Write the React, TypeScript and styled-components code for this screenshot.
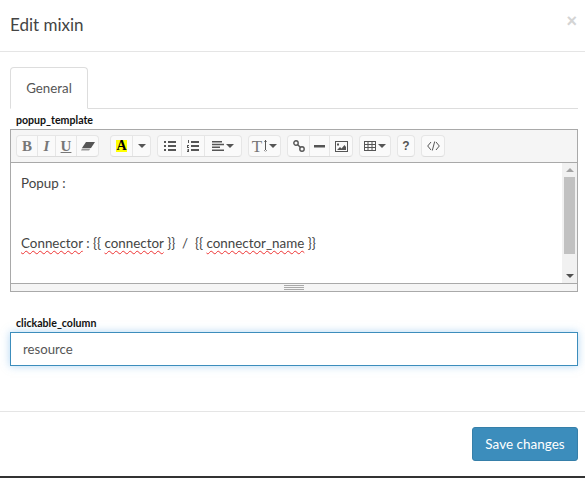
import type { ReactNode } from "react";
import styled, { createGlobalStyle } from "styled-components";

const FONT = `Lato, "Noto Sans", sans-serif`;

const GlobalStyle = createGlobalStyle`
  html, body {
    margin: 0;
    padding: 0;
    background: #fff;
  }
  * {
    box-sizing: border-box;
  }
`;

const Modal = styled.div`
  width: 585px;
  height: 478px;
  display: flex;
  flex-direction: column;
  background: #fff;
  border-bottom: 2px solid #333;
  font-family: ${FONT};
  overflow: hidden;
`;

const Header = styled.div`
  height: 52px;
  flex: none;
  display: flex;
  justify-content: space-between;
  padding: 0 8px 0 10px;
  border-bottom: 1px solid #e5e5e5;
`;

const Title = styled.h4`
  margin: 0;
  font-size: 17px;
  font-weight: 400;
  line-height: 50px;
  color: #444;
`;

const Close = styled.span`
  font-family: "Liberation Sans", sans-serif;
  font-size: 18px;
  font-weight: 700;
  line-height: 42px;
  color: #d4d4d4;
`;

const Body = styled.div`
  flex: 1;
  padding: 15px 7px 0 10px;
`;

const Tabs = styled.div`
  height: 42px;
  border-bottom: 1px solid #ddd;
`;

const Tab = styled.div`
  width: 78px;
  height: 42px;
  background: #fff;
  border: 1px solid #ddd;
  border-bottom-color: #fff;
  border-radius: 4px 4px 0 0;
  font-size: 13.3px;
  line-height: 41px;
  text-align: center;
  color: #555;
`;

const Label = styled.label`
  display: block;
  height: 20px;
  padding: 4px 0 0 6px;
  font-size: 10.6px;
  font-weight: 700;
  line-height: 14px;
  color: #111;
`;

const Editor = styled.div`
  height: 163px;
  display: flex;
  flex-direction: column;
  border: 1px solid #a9a9a9;
`;

const Toolbar = styled.div`
  height: 33px;
  flex: none;
  display: flex;
  align-items: flex-start;
  gap: 6px;
  padding: 5px 0 0 5px;
  background: #f5f5f5;
  border-bottom: 1px solid #a9a9a9;
`;

const Group = styled.div<{ $gap?: number }>`
  display: flex;
  height: 22px;
  margin-left: ${({ $gap }) => $gap ?? 0}px;
  background: #fafafa;
  border: 1px solid #e6e6e6;
  border-bottom-color: #dcdcdc;
  border-radius: 4px;
`;

const ToolButton = styled.div<{ $w: number }>`
  width: ${({ $w }) => $w}px;
  display: flex;
  align-items: center;
  justify-content: center;
  gap: 2px;
  & + & {
    border-left: 1px solid #e6e6e6;
  }
`;

const Glyph = styled.span<{ $italic?: boolean; $underline?: boolean; $regular?: boolean }>`
  font-family: "Liberation Serif", serif;
  font-size: ${({ $regular }) => ($regular ? 17 : 15)}px;
  font-weight: ${({ $regular }) => ($regular ? 400 : 700)};
  font-style: ${({ $italic }) => ($italic ? "italic" : "normal")};
  text-decoration: ${({ $underline }) => ($underline ? "underline" : "none")};
  color: #777;
  line-height: 1;
`;

const Help = styled.span`
  font-family: "Liberation Sans", sans-serif;
  font-size: 12px;
  font-weight: 700;
  color: #555;
`;

const ColorGlyph = styled.span`
  width: 11px;
  height: 12px;
  background: #ff0;
  font-family: "Liberation Serif", serif;
  font-size: 14px;
  font-weight: 700;
  line-height: 12px;
  text-align: center;
  color: #000;
`;

const Caret = styled.span`
  width: 0;
  height: 0;
  border-left: 4px solid transparent;
  border-right: 4px solid transparent;
  border-top: 4px solid #555;
`;

const Content = styled.div`
  height: 120px;
  flex: none;
  display: flex;
  justify-content: space-between;
`;

const Text = styled.div`
  padding: 10px 10px;
  font-size: 13.4px;
  line-height: 20px;
  color: #444;
`;

const Para = styled.p`
  margin: 0;
  min-height: 20px;
  white-space: pre;
`;

const Misspelled = styled.span`
  text-decoration: underline wavy #e33;
  text-decoration-thickness: 1px;
  text-underline-offset: 2px;
`;

const Scrollbar = styled.div`
  width: 15px;
  flex: none;
  display: flex;
  flex-direction: column;
  align-items: center;
  background: #f1f1f1;
`;

const Arrow = styled.span<{ $down?: boolean }>`
  width: 0;
  height: 0;
  margin: 5px 0;
  border-left: 4px solid transparent;
  border-right: 4px solid transparent;
  ${({ $down }) => ($down ? "border-top: 4px solid #505050;" : "border-bottom: 4px solid #a3a3a3;")}
`;

const Thumb = styled.div`
  width: 11px;
  height: 77px;
  background: #c1c1c1;
`;

const Spacer = styled.div`
  flex: 1;
`;

const Statusbar = styled.div`
  flex: 1;
  display: flex;
  flex-direction: column;
  align-items: center;
  justify-content: center;
  gap: 1px;
  background: #f5f5f5;
  border-top: 1px solid #a9a9a9;
`;

const Grip = styled.span`
  width: 20px;
  height: 1px;
  background: #a9a9a9;
`;

const SecondField = styled.div`
  margin-top: 20px;
`;

const Input = styled.input`
  display: block;
  width: 100%;
  height: 34px;
  padding: 0 12px;
  border: 1px solid #3c8dbc;
  outline: none;
  box-shadow: 0 0 8px rgba(102, 175, 233, 0.5);
  font-family: ${FONT};
  font-size: 13.2px;
  color: #555;
`;

const Footer = styled.div`
  height: 65px;
  flex: none;
  display: flex;
  justify-content: flex-end;
  padding: 15px 7px 0 0;
  border-top: 1px solid #e5e5e5;
`;

const SaveButton = styled.button`
  width: 106px;
  height: 34px;
  padding: 0;
  background: #3c8dbc;
  border: 1px solid #367fa9;
  border-radius: 3px;
  font-family: ${FONT};
  font-size: 13.5px;
  color: #fff;
`;

const Icon = ({ w = 14, h = 12, children }: { w?: number; h?: number; children: ReactNode }) => (
  <svg width={w} height={h} viewBox={`0 0 ${w} ${h}`} fill="#555">
    {children}
  </svg>
);

const App = () => {
  return (
    <>
      <GlobalStyle />
      <Modal>
        <Header>
          <Title>Edit mixin</Title>
          <Close>×</Close>
        </Header>
        <Body>
          <Tabs>
            <Tab>General</Tab>
          </Tabs>
          <Label>popup_template</Label>
          <Editor>
            <Toolbar>
              <Group>
                <ToolButton $w={20}>
                  <Glyph>B</Glyph>
                </ToolButton>
                <ToolButton $w={18}>
                  <Glyph $italic>I</Glyph>
                </ToolButton>
                <ToolButton $w={21}>
                  <Glyph $underline>U</Glyph>
                </ToolButton>
                <ToolButton $w={22}>
                  <Icon h={9}>
                    <path d="M5 0h9L10 6H1z" />
                    <path d="M1 6.500h8.500L8 8.500H0z" fill="#999" />
                  </Icon>
                </ToolButton>
              </Group>
              <Group $gap={5}>
                <ToolButton $w={21}>
                  <ColorGlyph>A</ColorGlyph>
                </ToolButton>
                <ToolButton $w={18}>
                  <Caret />
                </ToolButton>
              </Group>
              <Group>
                <ToolButton $w={23}>
                  <Icon w={12} h={10}>
                    <path d="M0 0h2v2H0zM0 4h2v2H0zM0 8h2v2H0zM4 0h8v2H4zM4 4h8v2H4zM4 8h8v2H4z" />
                  </Icon>
                </ToolButton>
                <ToolButton $w={23}>
                  <Icon w={12} h={12}>
                    <path d="M1 0h1v3H1zM0 5h2v1H1v1h1v1H0zM0 9h2v3H0v-1h1v-.5H0v-.5h1V9.500H0zM4 1h8v2H4zM4 5h8v2H4zM4 9h8v2H4z" />
                  </Icon>
                </ToolButton>
                <ToolButton $w={37}>
                  <Icon w={12} h={10}>
                    <path d="M0 0h10v1.500H0zM0 2.800h12v1.500H0zM0 5.600h8v1.500H0zM0 8.400h12v1.500H0z" />
                  </Icon>
                  <Caret />
                </ToolButton>
              </Group>
              <Group>
                <ToolButton $w={31}>
                  <Glyph $regular>T</Glyph>
                  <Icon w={3} h={12}>
                    <path d="M1 0h1v12H1zM0 2l1.500-2L3 2zM0 10l1.500 2L3 10z" />
                  </Icon>
                  <Caret />
                </ToolButton>
              </Group>
              <Group>
                <ToolButton $w={21}>
                  <Icon w={12} h={12}>
                    <g fill="none" stroke="#555" strokeWidth="1.4">
                      <circle cx="3" cy="3" r="2.200" />
                      <circle cx="9" cy="9" r="2.200" />
                      <path d="M4.500 4.500 7.500 7.500" />
                    </g>
                  </Icon>
                </ToolButton>
                <ToolButton $w={20}>
                  <Icon w={11} h={3}>
                    <path d="M0 0h11v2.500H0z" />
                  </Icon>
                </ToolButton>
                <ToolButton $w={23}>
                  <Icon w={13} h={11}>
                    <path d="M0 0h13v11H0zM1 1v9h11V1z" />
                    <path d="M2 4.500h2V2.500H2zM2 9l3-3 1.500 1.500 3-3.500L11 6v3z" />
                  </Icon>
                </ToolButton>
              </Group>
              <Group>
                <ToolButton $w={30}>
                  <Icon w={12} h={10}>
                    <path d="M0 0h12v10H0zM1 1v2h2.500V1zM4.500 1v2h3V1zM8.500 1v2H11V1zM1 4v2h2.500V4zM4.500 4v2h3V4zM8.500 4v2H11V4zM1 7v2h2.500V7zM4.500 7v2h3V7zM8.500 7v2H11V7z" />
                  </Icon>
                  <Caret />
                </ToolButton>
              </Group>
              <Group>
                <ToolButton $w={16}>
                  <Help>?</Help>
                </ToolButton>
              </Group>
              <Group>
                <ToolButton $w={22}>
                  <Icon w={13} h={10}>
                    <path d="M4 1 .7 5 4 9M9 1l3.300 4L9 9M7.700.5 5.300 9.500" fill="none" stroke="#555" />
                  </Icon>
                </ToolButton>
              </Group>
            </Toolbar>
            <Content>
              <Text>
                <Para>Popup :</Para>
                <Para />
                <Para />
                <Para>
                  <Misspelled>Connector</Misspelled> : {"{{ "}
                  <Misspelled>connector</Misspelled>
                  {" }}  /  {{ "}
                  <Misspelled>connector_name</Misspelled>
                  {" }}"}
                </Para>
              </Text>
              <Scrollbar>
                <Arrow />
                <Thumb />
                <Spacer />
                <Arrow $down />
              </Scrollbar>
            </Content>
            <Statusbar>
              <Grip />
              <Grip />
              <Grip />
            </Statusbar>
          </Editor>
          <SecondField>
            <Label>clickable_column</Label>
            <Input readOnly value="resource" />
          </SecondField>
        </Body>
        <Footer>
          <SaveButton>Save changes</SaveButton>
        </Footer>
      </Modal>
    </>
  );
};

export default App;
